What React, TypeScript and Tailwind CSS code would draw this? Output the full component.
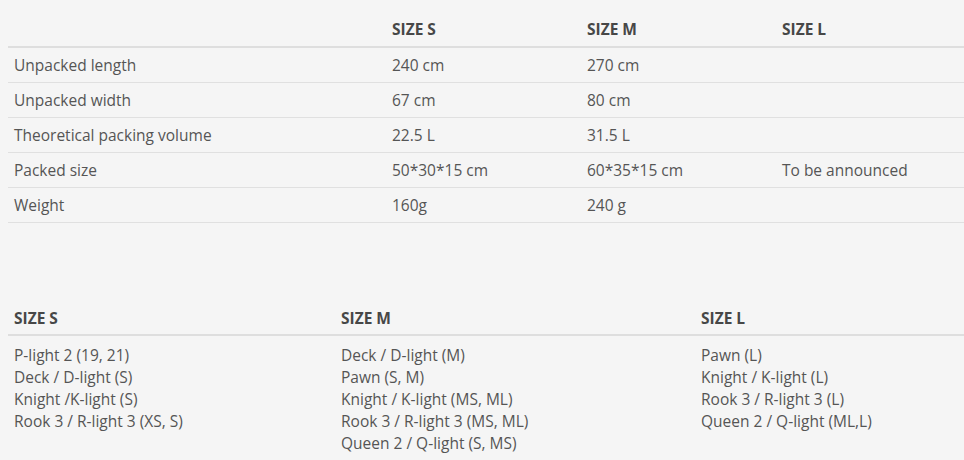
import React from 'react';

const specs = [
  { label: 'Unpacked length', s: '240 cm', m: '270 cm', l: '' },
  { label: 'Unpacked width', s: '67 cm', m: '80 cm', l: '' },
  { label: 'Theoretical packing volume', s: '22.5 L', m: '31.5 L', l: '' },
  { label: 'Packed size', s: '50*30*15 cm', m: '60*35*15 cm', l: 'To be announced' },
  { label: 'Weight', s: '160g', m: '240 g', l: '' },
];

const fits = [
  {
    size: 'SIZE S',
    items: ['P-light 2 (19, 21)', 'Deck / D-light (S)', 'Knight /K-light (S)', 'Rook 3 / R-light 3 (XS, S)'],
  },
  {
    size: 'SIZE M',
    items: ['Deck / D-light (M)', 'Pawn (S, M)', 'Knight / K-light (MS, ML)', 'Rook 3 / R-light 3 (MS, ML)', 'Queen 2 / Q-light (S, MS)'],
  },
  {
    size: 'SIZE L',
    items: ['Pawn (L)', 'Knight / K-light (L)', 'Rook 3 / R-light 3 (L)', 'Queen 2 / Q-light (ML,L)'],
  },
];

const App = () => {
  return (
    <div
      className="w-[964px] h-[460px] overflow-hidden bg-[#f5f5f5] text-[15.5px] text-[#555] pl-2"
      style={{ fontFamily: '"Open Sans", "Liberation Sans", sans-serif' }}
    >
      {/* Specs table */}
      <div className="grid grid-cols-[378px_195px_195px_1fr] font-bold text-[#474747] leading-[22px] border-b-2 border-[#dedede]">
        <div className="pt-[18px] pb-[6px] px-[6px]"></div>
        <div className="pt-[18px] pb-[6px] px-[6px]">SIZE S</div>
        <div className="pt-[18px] pb-[6px] px-[6px]">SIZE M</div>
        <div className="pt-[18px] pb-[6px] px-[6px]">SIZE L</div>
      </div>
      {specs.map((row) => (
        <div
          key={row.label}
          className="grid grid-cols-[378px_195px_195px_1fr] leading-[22px] border-b border-[#e0e0e0]"
        >
          <div className="py-[6px] px-[6px]">{row.label}</div>
          <div className="py-[6px] px-[6px]">{row.s}</div>
          <div className="py-[6px] px-[6px]">{row.m}</div>
          <div className="py-[6px] px-[6px]">{row.l}</div>
        </div>
      ))}

      {/* Compatibility table */}
      <div className="mt-[84px] grid grid-cols-[327px_360px_1fr] font-bold text-[#474747] leading-[22px] border-b-2 border-[#dedede]">
        {fits.map((col) => (
          <div key={col.size} className="pb-[5px] px-[6px]">{col.size}</div>
        ))}
      </div>
      <div className="grid grid-cols-[327px_360px_1fr] leading-[22px]">
        {fits.map((col) => (
          <div key={col.size} className="pt-[8px] px-[6px]">
            {col.items.map((it) => (
              <div key={it}>{it}</div>
            ))}
          </div>
        ))}
      </div>
    </div>
  );
};

export default App;
